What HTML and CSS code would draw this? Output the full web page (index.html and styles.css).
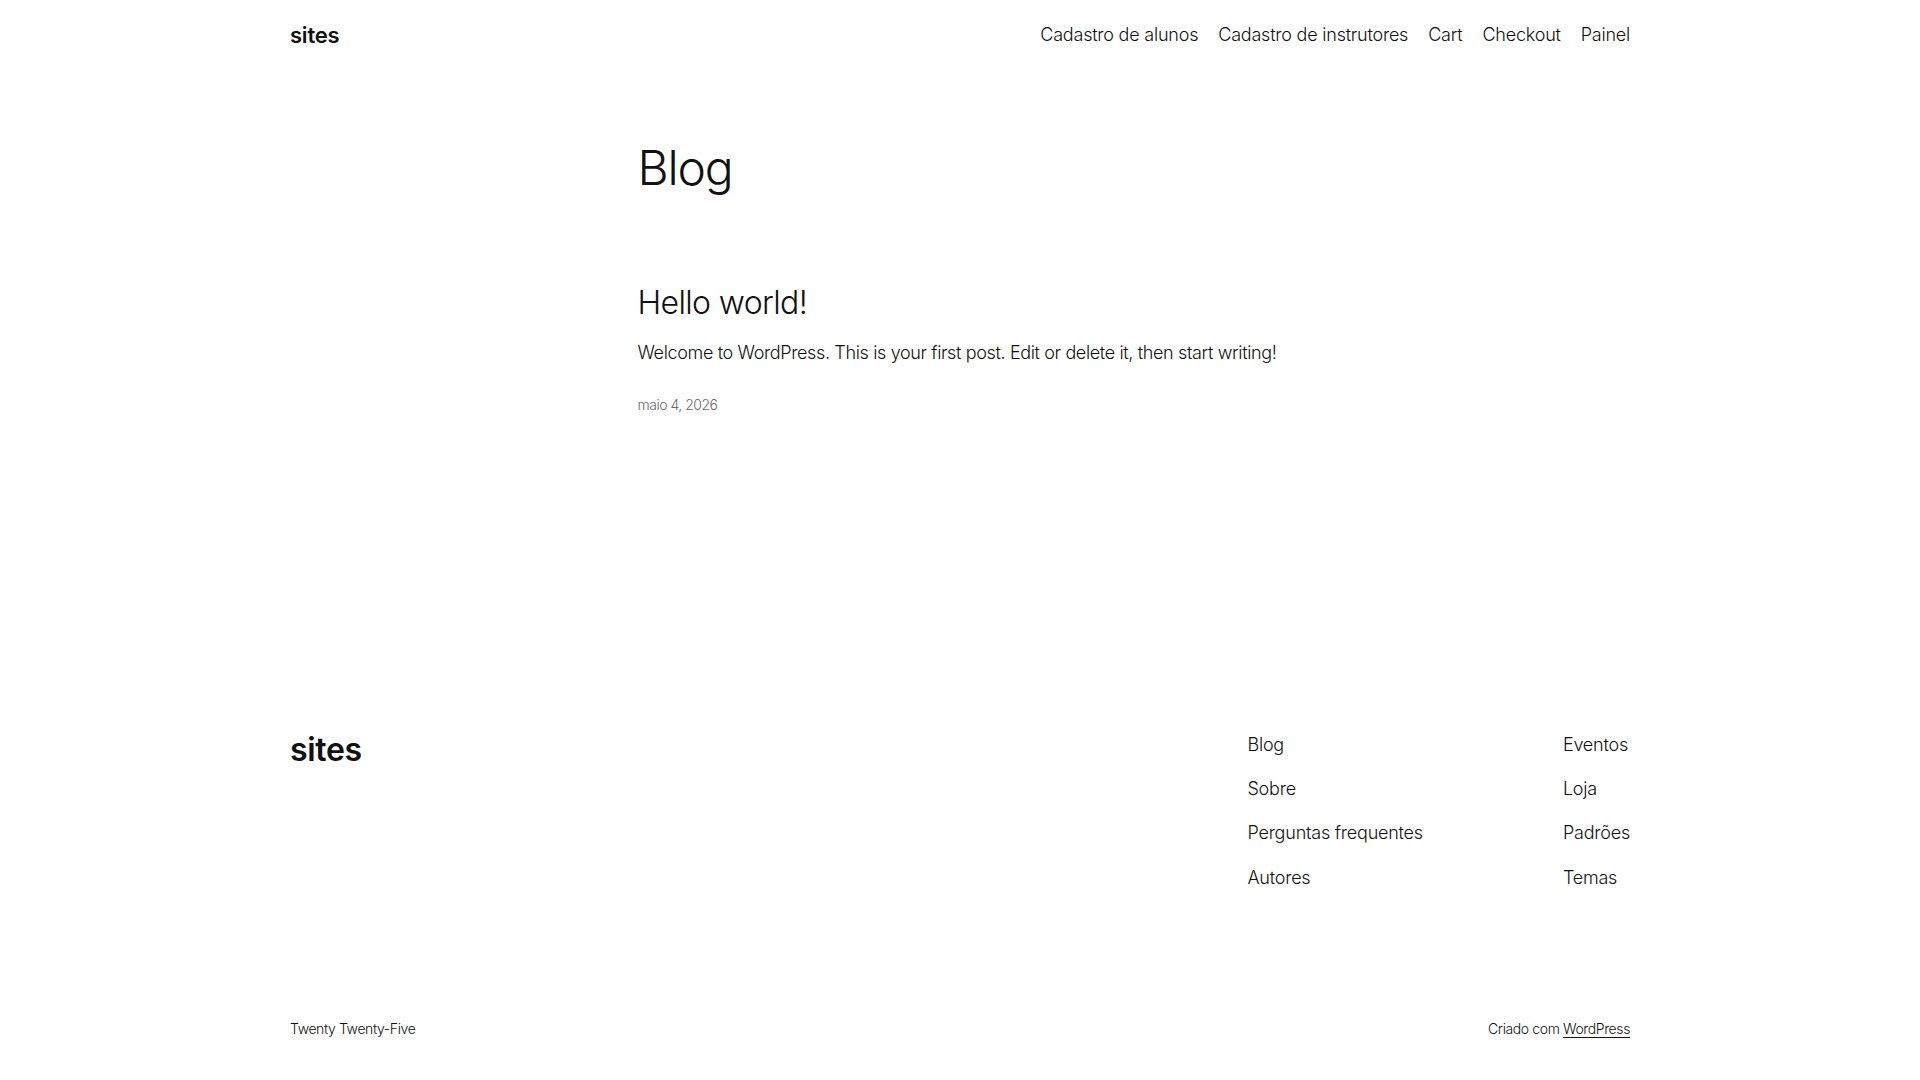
FILE: index.html
```html
<!DOCTYPE html>
<html lang="pt-BR">
<head>
    <meta charset="UTF-8">
    <meta name="viewport" content="width=device-width, initial-scale=1.0">
    <title>Blog – sites</title>
    <link rel="stylesheet" href="styles.css">
</head>
<body>
    <header class="site-header">
        <a class="site-title" href="#">sites</a>
        <nav class="main-nav">
            <a href="#">Cadastro de alunos</a>
            <a href="#">Cadastro de instrutores</a>
            <a href="#">Cart</a>
            <a href="#">Checkout</a>
            <a href="#">Painel</a>
        </nav>
    </header>

    <main class="site-main">
        <h1 class="page-title">Blog</h1>

        <article class="post">
            <h2 class="post-title"><a href="#">Hello world!</a></h2>
            <p class="post-excerpt">Welcome to WordPress. This is your first post. Edit or delete it, then start writing!</p>
            <time class="post-date" datetime="2026-05-04">maio 4, 2026</time>
        </article>
    </main>

    <footer class="site-footer">
        <div class="footer-top">
            <a class="footer-title" href="#">sites</a>
            <div class="footer-navs">
                <nav class="footer-nav">
                    <a href="#">Blog</a>
                    <a href="#">Sobre</a>
                    <a href="#">Perguntas frequentes</a>
                    <a href="#">Autores</a>
                </nav>
                <nav class="footer-nav">
                    <a href="#">Eventos</a>
                    <a href="#">Loja</a>
                    <a href="#">Padrões</a>
                    <a href="#">Temas</a>
                </nav>
            </div>
        </div>
        <div class="footer-bottom">
            <span>Twenty Twenty-Five</span>
            <span>Criado com <a class="credit" href="#">WordPress</a></span>
        </div>
    </footer>
</body>
</html>
```

FILE: styles.css
```css
body {
    margin: 0;
    background: #fff;
    color: #111;
    font-family: Inter, "Noto Sans", sans-serif;
    font-weight: 300;
    font-size: 18px;
    line-height: 1.4;
    letter-spacing: -0.012em;
}

a {
    color: inherit;
    text-decoration: none;
}

/* header */
.site-header {
    max-width: 1340px;
    margin: 0 auto;
    height: 70px;
    display: flex;
    align-items: center;
    justify-content: space-between;
}

.site-title {
    font-size: 22px;
    font-weight: 600;
    letter-spacing: -0.01em;
}

.main-nav {
    display: flex;
    gap: 20px;
    font-size: 18px;
}

/* content */
.site-main {
    width: 645px;
    margin: 0 auto;
    padding-top: 71px;
    min-height: 580px;
}

.page-title {
    margin: 0;
    font-size: 48px;
    font-weight: 300;
    line-height: 1.125;
    letter-spacing: -0.025em;
}

.post {
    margin-top: 89px;
}

.post-title {
    margin: 0;
    font-size: 32px;
    font-weight: 300;
    line-height: 1.2;
    letter-spacing: -0.02em;
}

.post-excerpt {
    margin: 18px 0 0;
    letter-spacing: -0.02em;
}

.post-date {
    display: block;
    margin-top: 29px;
    font-size: 14px;
    color: #6a6a6a;
    letter-spacing: -0.035em;
}

/* footer */
.site-footer {
    max-width: 1340px;
    margin: 0 auto;
}

.footer-top {
    display: flex;
    justify-content: space-between;
    align-items: flex-start;
    padding-top: 11px;
}

.footer-title {
    font-size: 32px;
    font-weight: 600;
    line-height: 1.2;
    letter-spacing: -0.01em;
    margin-top: -1px;
}

.footer-navs {
    display: flex;
    gap: 140px;
}

.footer-nav {
    display: flex;
    flex-direction: column;
    gap: 19px;
}

.footer-bottom {
    display: flex;
    justify-content: space-between;
    margin-top: 129px;
    padding-bottom: 40px;
    font-size: 14px;
    letter-spacing: -0.028em;
}

.credit {
    text-decoration: underline;
    text-underline-offset: 3px;
}
```
